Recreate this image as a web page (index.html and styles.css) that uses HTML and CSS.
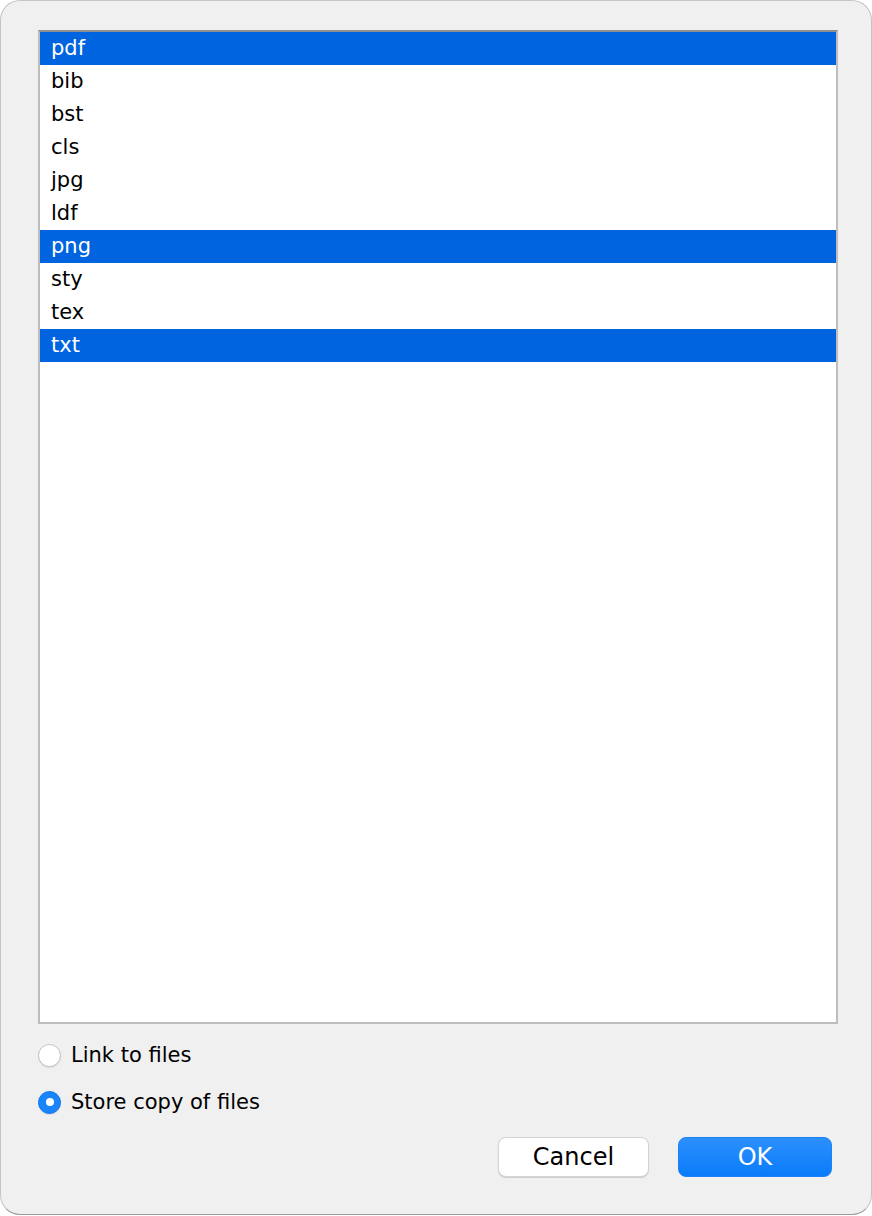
FILE: index.html
```html
<!DOCTYPE html>
<html>
<head>
<meta charset="utf-8">
<link rel="stylesheet" href="styles.css">
</head>
<body>
<div class="window">
  <ul class="list">
    <li class="sel">pdf</li>
    <li>bib</li>
    <li>bst</li>
    <li>cls</li>
    <li>jpg</li>
    <li>ldf</li>
    <li class="sel">png</li>
    <li>sty</li>
    <li>tex</li>
    <li class="sel">txt</li>
  </ul>
  <div class="radios">
    <label class="radio"><span class="circle"></span>Link to files</label>
    <label class="radio"><span class="circle on"></span>Store copy of files</label>
  </div>
  <div class="buttons">
    <button class="btn cancel">Cancel</button>
    <button class="btn ok">OK</button>
  </div>
</div>
</body>
</html>
```
FILE: styles.css
```css
html, body {
  margin: 0;
  padding: 0;
  background: #ffffff;
}
body {
  width: 872px;
  height: 1216px;
  overflow: hidden;
  font-family: "DejaVu Sans", "Liberation Sans", sans-serif;
}
.window {
  box-sizing: border-box;
  width: 872px;
  height: 1215px;
  background: #f0f0f0;
  border: 1px solid #c4c4c4;
  border-bottom-color: #9a9a9a;
  border-radius: 20px;
  padding: 29px 33px 0 37px;
  display: flex;
  flex-direction: column;
}
.list {
  list-style: none;
  margin: 0;
  padding: 0;
  height: 994px;
  box-sizing: border-box;
  background: #ffffff;
  border: 2px solid #bdbdbd;
  border-top-color: #8f8f8f;
  font-size: 21px;
  color: #000;
}
.list li {
  height: 33px;
  line-height: 32px;
  padding-left: 11px;
}
.list li.sel {
  background: #0064e1;
  color: #ffffff;
}
.radios {
  display: flex;
  flex-direction: column;
  gap: 25px;
  margin-top: 20px;
}
.radio {
  display: flex;
  align-items: center;
  gap: 10px;
  font-size: 21px;
  height: 22px;
  color: #000;
}
.circle {
  box-sizing: border-box;
  width: 23px;
  height: 23px;
  border-radius: 50%;
  background: #ffffff;
  border: 1px solid #c2c2c2;
  box-shadow: 0 1px 1px rgba(0,0,0,0.08);
}
.circle.on {
  background: #1a84fb;
  border-color: #1478ef;
  display: flex;
  align-items: center;
  justify-content: center;
}
.circle.on::after {
  content: "";
  width: 8px;
  height: 8px;
  border-radius: 50%;
  background: #ffffff;
}
.buttons {
  display: flex;
  justify-content: flex-end;
  gap: 29px;
  margin-top: 24px;
  padding-right: 6px;
}
.btn {
  font-family: "DejaVu Sans", "Liberation Sans", sans-serif;
  font-size: 24px;
  height: 40px;
  border-radius: 8px;
  padding: 0;
}
.cancel {
  width: 151px;
  background: #ffffff;
  border: 1px solid #d4d4d4;
  box-shadow: 0 1px 1px rgba(0,0,0,0.15);
  color: #000;
}
.ok {
  width: 154px;
  background: linear-gradient(#2c90fc, #0a7bfa);
  border: 1px solid #1c82f8;
  color: #ffffff;
}
```
